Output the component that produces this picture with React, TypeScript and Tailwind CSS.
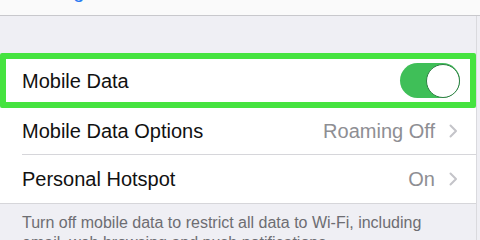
const font = { fontFamily: '"Liberation Sans", Arial, sans-serif' }

function Chevron() {
  return (
    <svg width="9" height="14" viewBox="0 0 9 14" fill="none">
      <polyline points="1.5,1.5 7,7 1.5,12.5" stroke="#c4c4c9" strokeWidth="2" strokeLinecap="round" strokeLinejoin="round" />
    </svg>
  )
}

function Toggle() {
  return (
    <div className="flex h-[35px] w-[60px] items-center justify-end rounded-full bg-[#3fbf58]">
      <div className="h-[34px] w-[34px] rounded-full border border-[#2f7f45] bg-white" />
    </div>
  )
}

function DetailRow({ label, value, last }: { label: string; value: string; last?: boolean }) {
  return (
    <div className={last ? "h-[49px] bg-white border-b border-[#d6d6da] pl-[22px]" : "h-[47px] bg-white pl-[22px]"}>
      <div
        className={
          last
            ? "flex h-full items-center justify-between pr-[18px]"
            : "flex h-full items-center justify-between border-b border-[#d6d6da] pr-[18px]"
        }
      >
        <span className="text-[20px] leading-none text-[#111]">{label}</span>
        <div className="flex items-center gap-[14px]">
          <span className="text-[20px] leading-none text-[#8e8e93]">{value}</span>
          <Chevron />
        </div>
      </div>
    </div>
  )
}

export default function App() {
  return (
    <div className="h-[240px] w-[480px] overflow-hidden bg-[#efeff4]" style={font}>
      <div className="h-[16px] overflow-hidden border-b border-[#c8c8cc] bg-[#fafafa]">
        <div className="-mt-[19px] flex h-[20px] items-center px-[10px] text-[20px] leading-[20px]">
          <span className="w-[175px] text-[#2a7bf2]">‹ Settings</span>
          <span className="font-semibold text-[#777]">Mobile Data</span>
        </div>
      </div>
      <div className="w-[477px] border-r border-[#dadade]">
        <div className="h-[37px]" />
        <div className="flex h-[55px] items-center justify-between rounded-[2px] border-[6px] border-[#45e33f] bg-white pl-[16px] pr-[10px]">
          <span className="text-[20px] leading-none text-[#111]">Mobile Data</span>
          <Toggle />
        </div>
        <DetailRow label="Mobile Data Options" value="Roaming Off" />
        <DetailRow label="Personal Hotspot" value="On" last />
        <p className="pl-[22px] pr-[30px] pt-[9px] text-[16px] leading-[20px] text-[#6d6d72]">
          Turn off mobile data to restrict all data to Wi-Fi, including email, web browsing and push notifications.
        </p>
      </div>
    </div>
  )
}
